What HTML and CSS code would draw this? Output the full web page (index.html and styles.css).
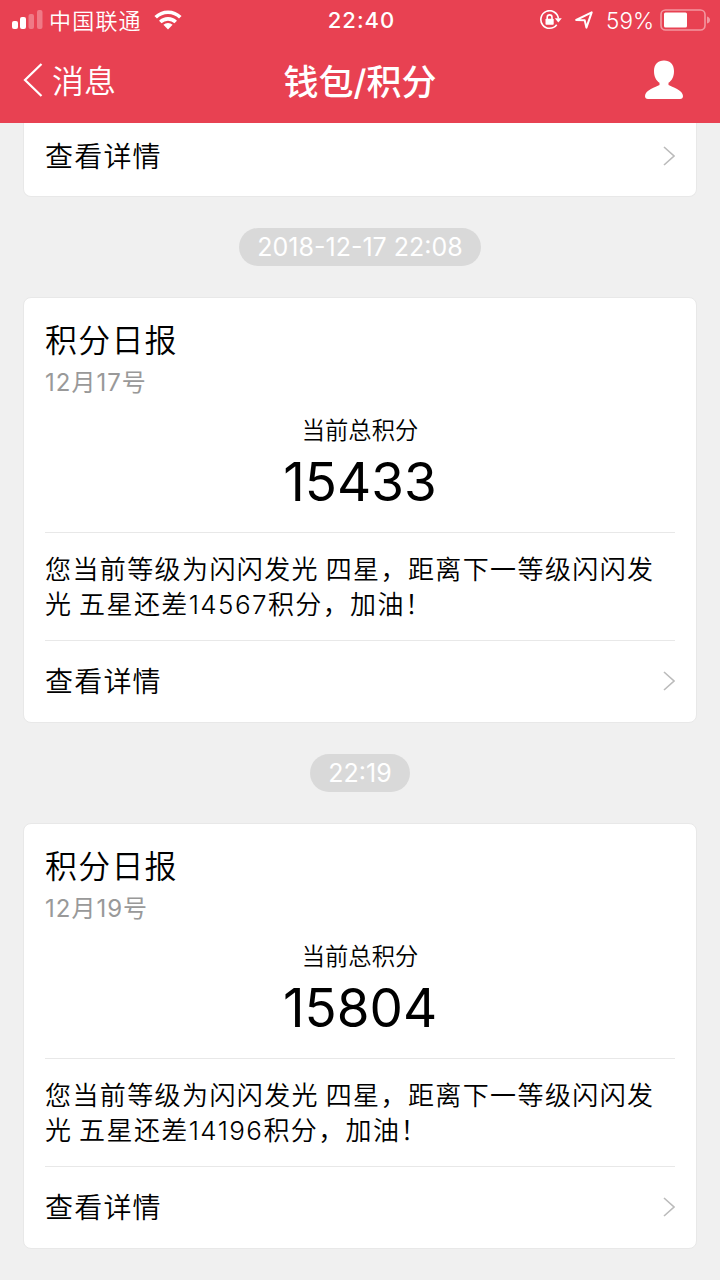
FILE: index.html
```
<!DOCTYPE html>
<html lang="zh-CN">
<head>
    <meta charset="UTF-8">
    <title>钱包/积分</title>
    <link rel="stylesheet" href="styles.css">
</head>
<body>
<header class="header">
    <div class="status">
        <div class="status-left">
            <svg class="signal" width="32" height="20" viewBox="0 0 32 20">
                <rect x="0" y="11" width="6" height="8" rx="2" fill="#fff"/>
                <rect x="8" y="7" width="6" height="12" rx="2" fill="#fff"/>
                <rect x="16.500" y="4" width="5.500" height="15" rx="2" fill="#fff" opacity=".3"/>
                <rect x="25" y="0" width="5.500" height="19" rx="2" fill="#fff" opacity=".3"/>
            </svg>
            <span class="carrier">中国联通</span>
            <svg class="wifi" width="28" height="20" viewBox="0 0 28 20" fill="none" stroke="#fff" stroke-width="3.600">
                <path d="M1.700 7.300a17.400 17.400 0 0 1 24.600 0"/>
                <path d="M6.300 12a11 11 0 0 1 15.400 0"/>
                <path d="M14 19.400L9.400 14.800a6.500 6.500 0 0 1 9.200 0z" fill="#fff" stroke="none"/>
            </svg>
        </div>
        <span class="time">22:40</span>
        <div class="status-right">
            <svg class="lock" width="22" height="20" viewBox="0 0 22 20" fill="none" stroke="#fff" stroke-width="1.600">
                <path d="M16.700 14.800A8.800 8.800 0 1 1 18.400 8.500"/>
                <path d="M14.800 8.300h7l-3.500 4.300z" fill="#fff" stroke="none"/>
                <rect x="5.500" y="8.700" width="8.200" height="6" rx=".8" fill="#fff" stroke="none"/>
                <path d="M7.200 9V7.300a2.400 2.400 0 0 1 4.800 0V9"/>
            </svg>
            <svg class="location" width="18" height="18" viewBox="0 0 18 18" fill="none" stroke="#fff" stroke-width="2" stroke-linejoin="round">
                <path d="M1.200 9L16.700 1.400L11.400 16.600L9.700 9.200z"/>
            </svg>
            <span class="percent">59%</span>
            <svg class="battery" width="50" height="22" viewBox="0 0 50 22">
                <rect x="1" y="1" width="44" height="20" rx="4.500" fill="none" stroke="#fff" stroke-width="1.600" opacity=".45"/>
                <rect x="4" y="3.500" width="23" height="15" rx="1.500" fill="#fff"/>
                <path d="M47 7.500q3 1 3 3.500t-3 3.500z" fill="#fff" opacity=".45"/>
            </svg>
        </div>
    </div>
    <div class="nav">
        <a class="back">
            <svg width="20" height="36" viewBox="0 0 20 36" fill="none" stroke="#fff" stroke-width="2.200">
                <path d="M18.500 2L2 18L18.500 34"/>
            </svg>
            <span>消息</span>
        </a>
        <h1>钱包/积分</h1>
        <a class="user">
            <svg width="40" height="40" viewBox="0 0 40 40">
                <path d="M20 .5C26 .5 30 4.500 30 11C30 17 27.800 20.500 24.500 22.800V25C28 27.200 39 30 39 36Q39 39 36 39H4Q1 39 1 36C1 30 12 27.200 15.500 25V22.800C12.200 20.500 10 17 10 11C10 4.500 14 .5 20 .5z" fill="#fff"/>
            </svg>
        </a>
    </div>
</header>

<div class="list">
    <div class="card card-first">
        <a class="more">
            <span>查看详情</span>
            <svg width="12" height="20" viewBox="0 0 12 20"><path d="M1 1L11 10L1 19"/></svg>
        </a>
    </div>

    <div class="stamp">2018-12-17 22:08</div>

    <div class="card">
        <h2>积分日报</h2>
        <p class="date">12月17号</p>
        <p class="label">当前总积分</p>
        <p class="total">15433</p>
        <p class="desc">您当前等级为闪闪发光 四星，距离下一等级闪闪发光 五星还差14567积分，加油！</p>
        <a class="more">
            <span>查看详情</span>
            <svg width="12" height="20" viewBox="0 0 12 20"><path d="M1 1L11 10L1 19"/></svg>
        </a>
    </div>

    <div class="stamp">22:19</div>

    <div class="card">
        <h2>积分日报</h2>
        <p class="date">12月19号</p>
        <p class="label">当前总积分</p>
        <p class="total">15804</p>
        <p class="desc">您当前等级为闪闪发光 四星，距离下一等级闪闪发光 五星还差14196积分，加油！</p>
        <a class="more">
            <span>查看详情</span>
            <svg width="12" height="20" viewBox="0 0 12 20"><path d="M1 1L11 10L1 19"/></svg>
        </a>
    </div>
</div>
</body>
</html>
```
FILE: styles.css
```
* {
    padding: 0;
    margin: 0;
    box-sizing: border-box;
}

body {
    height: 1280px;
    overflow: hidden;
    background: #f0f0f0;
    color: #000;
    font-family: Inter, "Noto Sans CJK SC", sans-serif;
    font-weight: 350;
}

svg {
    display: block;
    flex: none;
}

/* 顶部 */
.header {
    height: 123px;
    background: #e84152;
    color: #fff;
}

.status {
    display: grid;
    grid-template-columns: 1fr auto 1fr;
    align-items: center;
    height: 40px;
    padding: 0 10px 0 12px;
}

.status-left,
.status-right {
    display: flex;
    align-items: center;
}

.status-right {
    justify-content: flex-end;
}

.carrier {
    margin: 0 12px 0 5px;
    padding-top: 2px;
    font-size: 22px;
    line-height: 32px;
    letter-spacing: 1.2px;
}

.time {
    padding-left: 1px;
    font-size: 22px;
    font-weight: 500;
    letter-spacing: 1px;
}

.location {
    margin: 0 13px;
}

.percent {
    margin-right: 6px;
    font-size: 22.5px;
}

.nav {
    display: grid;
    grid-template-columns: 1fr auto 1fr;
    align-items: center;
    height: 80px;
    padding: 0 23px;
}

.back {
    display: flex;
    align-items: center;
    gap: 9px;
    font-size: 32px;
}

.back span {
    padding-top: 3px;
    line-height: 46px;
}

.nav h1 {
    padding-top: 3px;
    font-size: 35px;
    font-weight: 500;
    line-height: 48px;
}

.user {
    justify-self: end;
    margin-right: 13px;
}

/* 消息列表 */
.list {
    display: flex;
    flex-direction: column;
    align-items: center;
    gap: 31px;
}

.card {
    width: 674px;
    height: 426px;
    padding: 21px 21px 0;
    background: #fff;
    border: 1px solid #e8e8e8;
    border-radius: 8px;
}

.card-first {
    height: 74px;
    padding-top: 0;
    border-top: 0;
    border-radius: 0 0 8px 8px;
}

.card h2 {
    font-size: 32px;
    font-weight: 350;
    line-height: 44px;
    letter-spacing: 1.2px;
}

.date {
    color: #999;
    font-size: 24px;
    font-weight: 400;
    line-height: 40px;
    letter-spacing: 1px;
}

.label {
    margin-top: 10px;
    font-size: 23.3px;
    line-height: 36px;
    text-align: center;
}

.total {
    height: 84px;
    border-bottom: 1px solid #e8e8e8;
    font-size: 53px;
    font-weight: 400;
    line-height: 66px;
    text-align: center;
}

.desc {
    height: 108px;
    padding-top: 19px;
    border-bottom: 1px solid #e8e8e8;
    font-size: 26px;
    line-height: 35px;
    letter-spacing: 1.4px;
    word-spacing: -2px;
}

.more {
    display: flex;
    align-items: center;
    justify-content: space-between;
    height: 80px;
    font-size: 28px;
    letter-spacing: 1.2px;
}

.more span {
    padding-top: 2px;
    line-height: 40px;
}

.card-first .more {
    height: 66px;
}

.more path {
    fill: none;
    stroke: #bbb;
    stroke-width: 1.6;
}

.stamp {
    height: 38px;
    padding: 0 18px;
    border-radius: 19px;
    background: #d9d9d9;
    color: #fff;
    font-size: 25px;
    font-weight: 400;
    line-height: 38px;
}
```
